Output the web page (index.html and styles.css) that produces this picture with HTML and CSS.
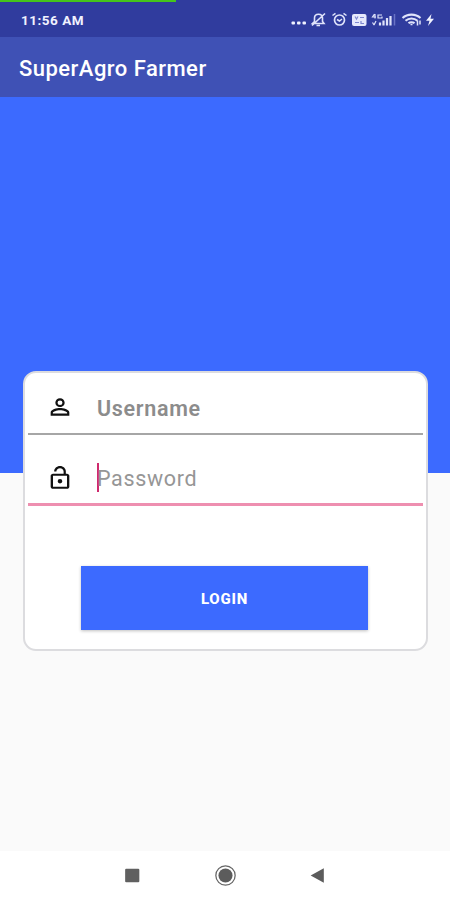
FILE: index.html
```html
<!DOCTYPE html>
<html lang="en">
<head>
  <meta charset="UTF-8" />
  <title>SuperAgro Farmer</title>
  <link rel="stylesheet" href="styles.css">
</head>
<body>
  <div class="phone">
    <div class="progress"></div>
    <header class="status-bar">
      <span class="time">11:56 AM</span>
      <svg class="status-icons" viewBox="0 0 146 20" fill="none" stroke="#dfe3fa">
        <!-- more dots -->
        <g fill="#f0f2ff" stroke="none">
          <rect x="1.500" y="11.500" width="3.500" height="3" rx="1" />
          <rect x="7" y="11.500" width="3.500" height="3" rx="1" />
          <rect x="12.500" y="11.500" width="3.500" height="3" rx="1" />
        </g>
        <!-- muted bell -->
        <path d="M22.500 13.500h11.500l-1.500-2V8c0-5-8-5-8 0v3.500zM26.500 15.500h3.500M22 15.500L35 3.500" stroke-width="1.600" />
        <!-- alarm -->
        <circle cx="49.500" cy="10" r="5" stroke-width="1.700" />
        <path d="M42.500 5.500l3-2.200M56.500 5.500l-3-2.200M47 9.500l2.500 1.500L52 9" stroke-width="1.500" />
        <!-- volte -->
        <rect x="62" y="4" width="14.500" height="12" rx="2" fill="#e6e9fc" stroke="none" />
        <path d="M65 6.500l1.500 2.500L68 6.500M70 7.500h4M65 12.500h4M71 11v2.500h3" stroke="#7d87d0" stroke-width="1.200" />
        <!-- signal -->
        <path d="M84.500 4l-2 3h3.500M85 4v4.500M92 5h-4v3h4V6.500M84 15l2-4M82.500 12.500l1.500 2.500" stroke-width="1.200" />
        <path d="M90 15.500v-3M93.500 15.500v-5M97 15.500V8M100.500 15.500V6" stroke-width="2.200" />
        <path d="M104.500 15.500V4" stroke="#6973c5" stroke-width="1.500" />
        <!-- wifi -->
        <path d="M112.500 8c5-4.500 13-4.500 18 0M115.500 10.800c3.500-3 8.500-3 12 0M118.500 13.200c1.500-1.300 4.500-1.300 6 0" stroke-width="2.100" />
        <path d="M120.500 14.500h2M127.500 10.500v5M130 10.500v4" stroke-width="1.500" />
        <!-- charging -->
        <path d="M141.500 4L136 10.800h3.500L138 16l6-7.300h-3.500z" fill="#f0f2ff" stroke="none" />
      </svg>
    </header>
    <div class="app-bar">SuperAgro Farmer</div>
    <div class="hero"></div>
    <main class="content">
      <form class="login-card">
        <label class="field">
          <svg class="field-icon" viewBox="0 0 24 24" preserveAspectRatio="none">
            <path d="M12 5.900a2.100 2.100 0 1 1 0 4.200 2.100 2.100 0 0 1 0-4.200m0 9c2.970 0 6.100 1.460 6.100 2.100v1.100H5.900V17c0-.64 3.130-2.100 6.100-2.100M12 4C9.790 4 8 5.790 8 8s1.790 4 4 4 4-1.790 4-4-1.790-4-4-4zm0 9c-2.670 0-8 1.340-8 4v3h16v-3c0-2.660-5.330-4-8-4z" />
          </svg>
          <span class="hint username">Username</span>
        </label>
        <label class="field focused">
          <svg class="field-icon" viewBox="0 0 24 24" preserveAspectRatio="none">
            <path d="M12 17a2 2 0 1 0 0-4 2 2 0 0 0 0 4zm6-9h-1V6c0-2.760-2.240-5-5-5S7 3.240 7 6h1.900c0-1.710 1.390-3.100 3.100-3.100s3.100 1.390 3.100 3.100v2H6c-1.100 0-2 .9-2 2v10c0 1.100.9 2 2 2h12c1.100 0 2-.9 2-2V10c0-1.100-.9-2-2-2zm0 12H6V10h12v10z" />
          </svg>
          <span class="caret"></span>
          <span class="hint password">Password</span>
        </label>
        <button class="login-button" type="button">LOGIN</button>
      </form>
    </main>
    <nav class="nav-bar">
      <svg viewBox="0 0 20 20"><rect x="3" y="3.500" width="13.500" height="13" rx="1" fill="#606060" /></svg>
      <svg viewBox="0 0 20 20">
        <circle cx="10" cy="10" r="9.200" fill="none" stroke="#666" stroke-width="1.200" />
        <circle cx="10" cy="10" r="6.700" fill="#5c5c5c" />
      </svg>
      <svg viewBox="0 0 20 20"><path d="M3.500 10l12.500-7v14z" fill="#5c5c5c" /></svg>
    </nav>
  </div>
</body>
</html>
```

FILE: styles.css
```css
body {
  margin: 0;
  font-family: Roboto, sans-serif;
  background: #fafafa;
}
.phone {
  position: relative;
  display: flex;
  flex-direction: column;
  width: 450px;
  height: 900px;
  overflow: hidden;
}
.progress {
  position: absolute;
  top: 0;
  left: 0;
  width: 176px;
  height: 2px;
  background: #45c51b;
}
.status-bar {
  display: flex;
  align-items: center;
  justify-content: space-between;
  box-sizing: border-box;
  height: 37px;
  padding: 2px 14px 0 21px;
  background: #303c9e;
}
.time {
  color: #f0f2ff;
  font-size: 13.5px;
  font-weight: 700;
  letter-spacing: 0.5px;
}
.status-icons {
  width: 146px;
  height: 20px;
}
.app-bar {
  height: 60px;
  padding-left: 19px;
  background: #3f51b5;
  color: #fff;
  font-size: 22px;
  font-weight: 500;
  letter-spacing: 0.47px;
  line-height: 63px;
}
.hero {
  flex: none;
  height: 376px;
  background: #3c6aff;
}
.content {
  flex: 1;
}
.login-card {
  position: relative;
  box-sizing: border-box;
  width: 405px;
  height: 280px;
  margin: -102px 0 0 23px;
  padding: 0 3px;
  background: #fff;
  border: 2px solid #dcdcdf;
  border-radius: 13px;
}
.field {
  display: flex;
  align-items: center;
  box-sizing: border-box;
  height: 62px;
  padding: 8px 0 0 18px;
  border-bottom: 2px solid #a6a6a6;
}
.focused {
  height: 71px;
  padding-top: 17px;
  border-bottom: 3px solid #ee8fb0;
}
.field-icon {
  width: 28px;
  height: 26px;
  fill: #111;
}
.hint {
  margin-left: 23px;
  padding-top: 3px;
  color: #8c8c8c;
  font-size: 22px;
  line-height: 28px;
}
.username {
  font-size: 21.5px;
  font-weight: 600;
  letter-spacing: 0.7px;
}
.caret {
  width: 2px;
  height: 29px;
  margin: 0 -2px 0 23px;
  background: #cf2a6d;
}
.password {
  margin-left: 0;
  color: #969696;
  font-size: 21.5px;
  letter-spacing: 0.65px;
}
.login-button {
  display: block;
  width: 287px;
  height: 64px;
  margin: 60px 0 0 53px;
  padding: 1px 0 0;
  background: #3c6aff;
  border: none;
  box-shadow: 0 1px 3px rgba(0, 0, 0, 0.25);
  color: #fff;
  font-family: inherit;
  font-size: 15px;
  font-weight: 800;
  letter-spacing: 0.8px;
}
.nav-bar {
  display: flex;
  align-items: center;
  justify-content: space-between;
  box-sizing: border-box;
  height: 49px;
  padding: 0 122px;
  background: #fff;
}
.nav-bar svg {
  width: 21px;
  height: 21px;
}
```
